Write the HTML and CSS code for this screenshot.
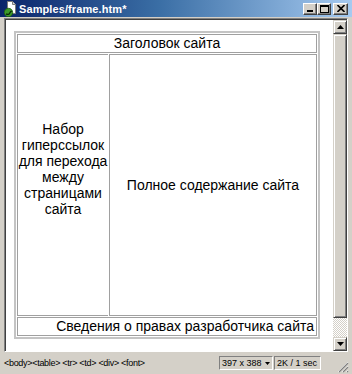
FILE: index.html
```html
<!DOCTYPE html>
<html>
<head>
    <meta charset="utf-8">
    <title>Samples/frame.htm*</title>
    <link rel="stylesheet" href="styles.css">
</head>
<body>
    <div class="window">
        <div class="titlebar">
            <svg class="file-icon" width="12" height="16" viewBox="0 0 12 16">
                <path d="M3.5 0.5h5l3 3v9h-8z" fill="#fff" stroke="#7a7a7a"/>
                <path d="M8.5 0.5v3h3" fill="#d8d8d8" stroke="#7a7a7a"/>
                <circle cx="4.5" cy="11.5" r="4.2" fill="#3c9a2a" stroke="#1f5c14" stroke-width="0.8"/>
                <path d="M2.2 12.8c1.2 1.2 3 0.6 3.6-0.9c0.4-1 1.2-1.6 2-1.4" fill="none" stroke="#0b2a06" stroke-width="1.3"/>
            </svg>
            <span class="title">Samples/frame.htm*</span>
            <div class="caption-buttons">
                <span class="cap-btn">
                    <svg width="8" height="7" viewBox="0 0 8 7"><rect x="1" y="5" width="6" height="2" fill="#000"/></svg>
                </span>
                <span class="cap-btn">
                    <svg width="9" height="8" viewBox="0 0 9 8"><rect x="0.5" y="0.5" width="8" height="7" fill="none" stroke="#000"/><rect x="0" y="0" width="9" height="2" fill="#000"/></svg>
                </span>
                <span class="cap-btn close">
                    <svg width="8" height="7" viewBox="0 0 8 7"><path d="M0.5 0l7 7M7.5 0l-7 7" stroke="#000" stroke-width="1.6"/></svg>
                </span>
            </div>
        </div>

        <div class="frame">
            <div class="doc">
                <div class="page">
                    <table class="layout">
                        <tr>
                            <td colspan="2" class="head">Заголовок сайта</td>
                        </tr>
                        <tr>
                            <td class="nav">Набор гиперссылок для перехода между страницами сайта</td>
                            <td class="main">Полное содержание сайта</td>
                        </tr>
                        <tr>
                            <td colspan="2" class="foot">Сведения о правах разработчика сайта</td>
                        </tr>
                    </table>
                </div>
                <div class="scrollbar">
                    <span class="sb-btn">
                        <svg width="7" height="4" viewBox="0 0 7 4"><path d="M3.5 0L7 4H0z" fill="#000"/></svg>
                    </span>
                    <span class="sb-thumb"></span>
                    <span class="sb-track"></span>
                    <span class="sb-btn">
                        <svg width="7" height="4" viewBox="0 0 7 4"><path d="M0 0h7L3.5 4z" fill="#000"/></svg>
                    </span>
                </div>
            </div>
        </div>

        <div class="statusbar">
            <span class="tags">&lt;body&gt;&lt;table&gt; &lt;tr&gt; &lt;td&gt; &lt;div&gt; &lt;font&gt;</span>
            <span class="panel size">397 x 388 <svg width="5" height="3" viewBox="0 0 5 3"><path d="M0 0h5L2.5 3z" fill="#000"/></svg></span>
            <span class="panel speed">2K / 1 sec</span>
            <svg class="grip" width="12" height="12" viewBox="0 0 12 12">
                <path d="M11 1L1 11M11 5L5 11M11 9L9 11" stroke="#fff" stroke-width="1"/>
                <path d="M11 2L2 11M11 6L6 11M11 10L10 11" stroke="#808080" stroke-width="1.2"/>
            </svg>
        </div>
    </div>
</body>
</html>
```

FILE: styles.css
```css
body {
    margin: 0;
    width: 352px;
    height: 374px;
    overflow: hidden;
    background-color: #d4d0c8;
    font-family: "Liberation Sans", Arial, sans-serif;
}
.window {
    display: flex;
    flex-direction: column;
    height: 374px;
}

/* title bar */
.titlebar {
    height: 17px;
    flex: none;
    display: flex;
    align-items: center;
    background: linear-gradient(to right, #0a246a 0%, #3a6ea5 45%, #a6caf0 100%);
    color: #fff;
}
.file-icon {
    margin: 0 3px 0 4px;
    flex: none;
}
.title {
    font-size: 11px;
    font-weight: bold;
    letter-spacing: 0.1px;
}
.caption-buttons {
    margin-left: auto;
    margin-right: 4px;
    display: flex;
}
.cap-btn {
    width: 14px;
    height: 12px;
    box-sizing: border-box;
    display: flex;
    align-items: center;
    justify-content: center;
    background-color: #d4d0c8;
    border: 1px solid;
    border-color: #fff #404040 #404040 #fff;
    box-shadow: inset -1px -1px #808080;
}
.cap-btn.close {
    margin-left: 2px;
    width: 15px;
}

/* document area */
.frame {
    flex: 1;
    min-height: 0;
    padding: 1px 4px 0 4px;
    display: flex;
}
.doc {
    flex: 1;
    display: flex;
    border: 1px solid;
    border-color: #808080 #fff #fff #808080;
    box-shadow: inset 1px 1px #404040;
}
.page {
    flex: 1;
    background-color: #fff;
    margin: 1px 0 0 1px;
    padding: 11px 0 0 8px;
}

table.layout {
    width: 306px;
    border: 2px solid #c4c4c4;
    border-spacing: 1px;
    font-size: 14px;
    color: #000;
}
table.layout td {
    border: 1px solid #a0a0a0;
    padding: 0;
    text-align: center;
    vertical-align: middle;
    line-height: 16px;
}
table.layout td.head,
table.layout td.foot {
    height: 17px;
    line-height: 17px;
}
table.layout td.foot {
    text-align: right;
    padding-right: 2px;
    white-space: nowrap;
}
table.layout td.nav {
    width: 90px;
    height: 227px;
    border-right: none;
    padding-bottom: 33px;
}

/* scrollbar */
.scrollbar {
    width: 14px;
    display: flex;
    flex-direction: column;
    margin-top: 1px;
}
.sb-btn,
.sb-thumb {
    box-sizing: border-box;
    background-color: #d4d0c8;
    border: 1px solid;
    border-color: #d4d0c8 #404040 #404040 #d4d0c8;
    box-shadow: inset 1px 1px #fff, inset -1px -1px #808080;
}
.sb-btn {
    height: 14px;
    flex: none;
    display: flex;
    align-items: center;
    justify-content: center;
}
.sb-thumb {
    flex: 1;
}
.sb-track {
    height: 19px;
    flex: none;
    background: repeating-conic-gradient(#d4d0c8 0 25%, #fff 0 50%) 0 0 / 2px 2px;
}

/* status bar */
.statusbar {
    height: 22px;
    flex: none;
    display: flex;
    align-items: center;
    font-size: 9px;
    color: #000;
    padding-left: 4px;
    white-space: nowrap;
}
.tags {
    white-space: pre;
    letter-spacing: -0.3px;
}
.panel {
    box-sizing: border-box;
    height: 14px;
    display: flex;
    align-items: center;
    padding: 0 2px;
    border: 1px solid;
    border-color: #808080 #fff #fff #808080;
}
.size {
    margin-left: auto;
    width: 54px;
    gap: 3px;
}
.speed {
    width: 47px;
    margin-left: 1px;
}
.grip {
    margin: 0 3px 1px 16px;
    align-self: flex-end;
}
```
